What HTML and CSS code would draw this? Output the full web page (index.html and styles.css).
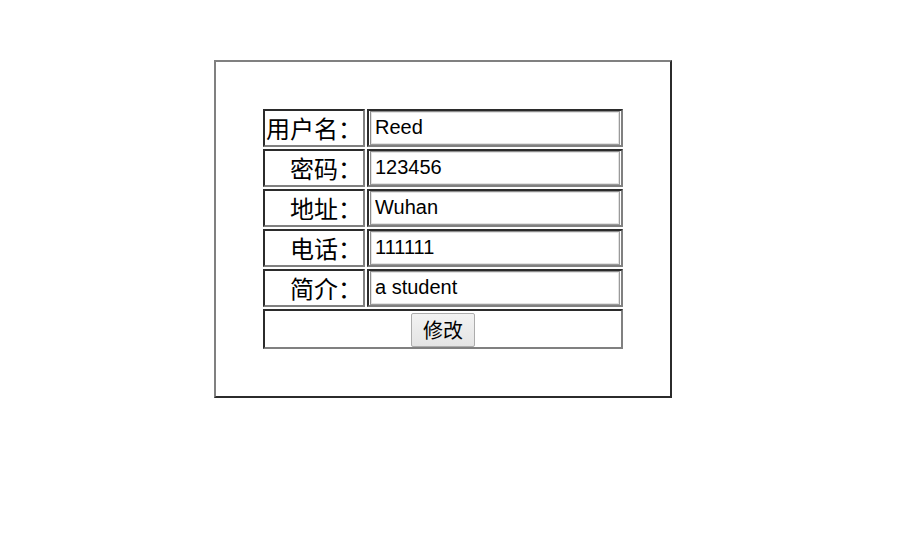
FILE: index.html
```html
<!DOCTYPE html>
<html lang="zh-CN">
<head>
<meta charset="utf-8">
<title>修改信息</title>
<link rel="stylesheet" href="styles.css">
</head>
<body>
<div class="box">
  <table class="form">
    <tr>
      <td class="label">用户名：</td>
      <td class="field"><input class="input" type="text" value="Reed"></td>
    </tr>
    <tr>
      <td class="label">密码：</td>
      <td class="field"><input class="input" type="text" value="123456"></td>
    </tr>
    <tr>
      <td class="label">地址：</td>
      <td class="field"><input class="input" type="text" value="Wuhan"></td>
    </tr>
    <tr>
      <td class="label">电话：</td>
      <td class="field"><input class="input" type="text" value="111111"></td>
    </tr>
    <tr>
      <td class="label">简介：</td>
      <td class="field"><input class="input" type="text" value="a student"></td>
    </tr>
    <tr>
      <td class="submit" colspan="2"><button class="btn" type="button">修改</button></td>
    </tr>
  </table>
</div>
</body>
</html>
```

FILE: styles.css
```css
html, body {
  margin: 0;
  padding: 0;
  background: #ffffff;
}

body {
  font-family: "Liberation Sans", "Noto Sans CJK SC", sans-serif;
  color: #000000;
}

.box {
  box-sizing: border-box;
  width: 458px;
  margin: 60px 0 0 214px;
  padding: 45px 0;
  border: 2px solid;
  border-color: #808080 #2b2b2b #2b2b2b #808080;
}

.form {
  width: 364px;
  margin: 0 auto;
  border-collapse: separate;
  border-spacing: 2px;
}

.form td {
  border: 2px solid;
  border-color: #2b2b2b #808080 #808080 #2b2b2b;
  padding: 0 1px;
  height: 34px;
}

.label {
  width: 96px;
  text-align: right;
  font-family: "Noto Sans CJK SC", sans-serif;
  font-size: 24px;
  line-height: 34px;
  white-space: nowrap;
}

.field {
  padding: 0 1px;
}

.input {
  display: block;
  box-sizing: border-box;
  width: 100%;
  height: 34px;
  margin: 0;
  padding: 0 3px 2px 4px;
  border: 1px solid #8c8c8c;
  border-color: #8c8c8c #9a9a9a #9a9a9a #8c8c8c;
  box-shadow: inset 0 0 0 1px #e2e2e2;
  font-family: "Liberation Sans", sans-serif;
  font-size: 20px;
  color: #000000;
  background: #ffffff;
  outline: none;
}

.form td.submit {
  height: 36px;
  text-align: center;
  padding: 0;
}

.btn {
  box-sizing: border-box;
  height: 34px;
  width: 64px;
  margin: 1px 0 0 0;
  padding: 0;
  vertical-align: top;
  border: 1px solid #acacac;
  border-radius: 2px;
  background: linear-gradient(#f2f2f2, #e4e4e4);
  font-family: "Noto Sans CJK SC", sans-serif;
  font-size: 20px;
  line-height: 30px;
  color: #000000;
}
```
